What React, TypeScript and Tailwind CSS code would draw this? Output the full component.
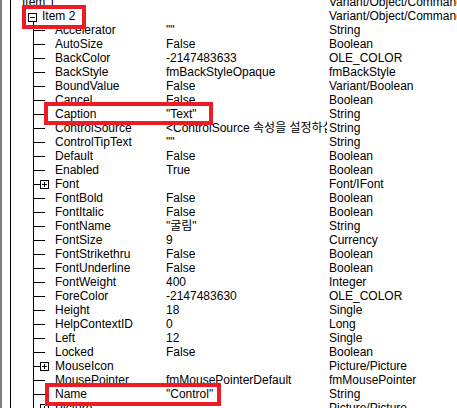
import React from "react";

type Kind = "leaf" | "plus";

interface Prop {
  name: string;
  value: string;
  type: string;
  kind?: Kind;
  mark?: "caption" | "name";
}

const props: Prop[] = [
  { name: "Accelerator", value: '""', type: "String" },
  { name: "AutoSize", value: "False", type: "Boolean" },
  { name: "BackColor", value: "-2147483633", type: "OLE_COLOR" },
  { name: "BackStyle", value: "fmBackStyleOpaque", type: "fmBackStyle" },
  { name: "BoundValue", value: "False", type: "Variant/Boolean" },
  { name: "Cancel", value: "False", type: "Boolean" },
  { name: "Caption", value: '"Text"', type: "String", mark: "caption" },
  { name: "ControlSource", value: "<ControlSource 속성을 설정하십시오>", type: "String" },
  { name: "ControlTipText", value: '""', type: "String" },
  { name: "Default", value: "False", type: "Boolean" },
  { name: "Enabled", value: "True", type: "Boolean" },
  { name: "Font", value: "", type: "Font/IFont", kind: "plus" },
  { name: "FontBold", value: "False", type: "Boolean" },
  { name: "FontItalic", value: "False", type: "Boolean" },
  { name: "FontName", value: '"굴림"', type: "String" },
  { name: "FontSize", value: "9", type: "Currency" },
  { name: "FontStrikethru", value: "False", type: "Boolean" },
  { name: "FontUnderline", value: "False", type: "Boolean" },
  { name: "FontWeight", value: "400", type: "Integer" },
  { name: "ForeColor", value: "-2147483630", type: "OLE_COLOR" },
  { name: "Height", value: "18", type: "Single" },
  { name: "HelpContextID", value: "0", type: "Long" },
  { name: "Left", value: "12", type: "Single" },
  { name: "Locked", value: "False", type: "Boolean" },
  { name: "MouseIcon", value: "", type: "Picture/Picture", kind: "plus" },
  { name: "MousePointer", value: "fmMousePointerDefault", type: "fmMousePointer" },
  { name: "Name", value: '"Control"', type: "String", mark: "name" },
  { name: "Picture", value: "", type: "Picture/Picture", kind: "plus" },
];

const NodeBox = ({ open }: { open: boolean }) => (
  <svg width="9" height="9" viewBox="0 0 9 9" shapeRendering="crispEdges" className="block shrink-0">
    <rect x="0.5" y="0.5" width="8" height="8" fill="white" stroke="black" />
    <line x1="2" y1="4.5" x2="7" y2="4.5" stroke="black" />
    {!open && <line x1="4.5" y1="2" x2="4.5" y2="7" stroke="black" />}
  </svg>
);

const PropRow = ({ p }: { p: Prop }) => (
  <div className="relative flex h-[14px] leading-[14px]">
    <div className="w-[8px] shrink-0" />
    <div className="w-px shrink-0 bg-black" />
    <div className="w-[22px] shrink-0" />
    <div className="w-px shrink-0 bg-black" />
    <div className="flex w-[21px] shrink-0 items-start">
      {p.kind === "plus" ? (
        <>
          <div className="mt-[7px] h-px w-[6px] bg-black" />
          <div className="mt-[3px]">
            <NodeBox open={false} />
          </div>
        </>
      ) : (
        <div className="mt-[7px] h-px w-[11px] bg-black" />
      )}
    </div>
    <div className="w-[111px] shrink-0 whitespace-nowrap">{p.name}</div>
    <div className="mr-[2px] w-[161px] shrink-0 overflow-hidden whitespace-nowrap">{p.value}</div>
    <div className="whitespace-nowrap">{p.type}</div>
    {p.mark === "caption" && (
      <div className="absolute left-[42px] top-[-5px] z-10 h-[23px] w-[169px] border-4 border-[#ed1c24]" />
    )}
    {p.mark === "name" && (
      <div className="absolute left-[43px] top-[-4px] z-10 h-[23px] w-[176px] border-4 border-[#ed1c24]" />
    )}
  </div>
);

export default function App() {
  return (
    <div className="flex h-[408px] w-[457px] overflow-hidden bg-white font-['Liberation_Sans','Noto_Sans_CJK_KR',sans-serif] text-[12px] text-black">
      <div className="w-[2px] shrink-0 bg-[#808080]" />
      <div className="mt-[-5px] flex flex-1 flex-col">
        {/* Item 1 (mostly scrolled off) */}
        <div className="flex h-[14px] leading-[14px]">
          <div className="w-[8px] shrink-0" />
          <div className="w-px shrink-0 bg-black" />
          <div className="w-[11px] shrink-0" />
          <div className="w-[144px] shrink-0 whitespace-nowrap">Item 1</div>
          <div className="w-[163px] shrink-0" />
          <div className="whitespace-nowrap">Variant/Object/CommandButton</div>
        </div>
        {/* Item 2 */}
        <div className="relative flex h-[14px] leading-[14px]">
          <div className="w-[8px] shrink-0" />
          <div className="w-px shrink-0 bg-black" />
          <div className="w-[17px] shrink-0" />
          <div className="flex w-[9px] shrink-0 flex-col pt-[4px]">
            <NodeBox open />
            <div className="ml-[5px] w-px flex-1 bg-black" />
          </div>
          <div className="w-[5px] shrink-0" />
          <div className="w-[124px] shrink-0 whitespace-nowrap">Item 2</div>
          <div className="w-[163px] shrink-0" />
          <div className="whitespace-nowrap">Variant/Object/CommandButton</div>
          <div className="absolute left-[20px] top-[-4px] z-10 h-[24px] w-[64px] border-4 border-[#ed1c24]" />
        </div>
        {props.map((p) => (
          <PropRow key={p.name} p={p} />
        ))}
      </div>
    </div>
  );
}
